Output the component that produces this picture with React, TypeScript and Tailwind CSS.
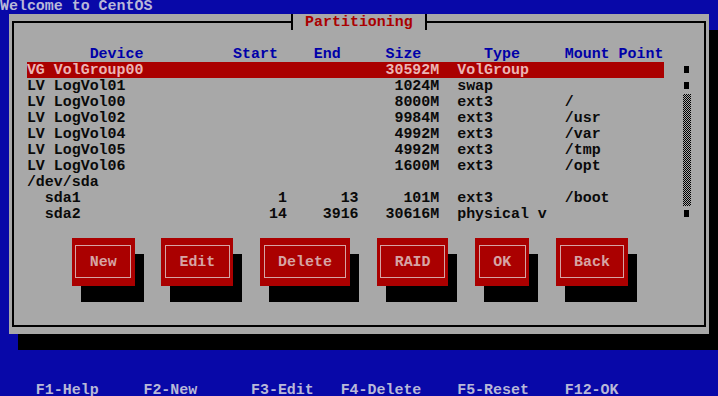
import React from 'react'

// text-mode screen: 80x25 cells of 8.975 x 16 px
type Part = { device: string; start?: string; end?: string; size?: string; type?: string; mount?: string }

const PARTS: Part[] = [
  { device: 'VG VolGroup00', size: '30592M', type: 'VolGroup' },
  { device: 'LV LogVol01', size: '1024M', type: 'swap' },
  { device: 'LV LogVol00', size: '8000M', type: 'ext3', mount: '/' },
  { device: 'LV LogVol02', size: '9984M', type: 'ext3', mount: '/usr' },
  { device: 'LV LogVol04', size: '4992M', type: 'ext3', mount: '/var' },
  { device: 'LV LogVol05', size: '4992M', type: 'ext3', mount: '/tmp' },
  { device: 'LV LogVol06', size: '1600M', type: 'ext3', mount: '/opt' },
  { device: '/dev/sda' },
  { device: '  sda1', start: '1', end: '13', size: '101M', type: 'ext3', mount: '/boot' },
  { device: '  sda2', start: '14', end: '3916', size: '30616M', type: 'physical v' },
]

const BUTTONS = ['New', 'Edit', 'Delete', 'RAID', 'OK', 'Back']

const HEADER =
  (' '.repeat(7) + 'Device').padEnd(23) + 'Start'.padEnd(9) + 'End'.padEnd(8) + 'Size'.padEnd(11) + 'Type'.padEnd(9) + 'Mount Point'

const HELP = '    F1-Help     F2-New      F3-Edit   F4-Delete    F5-Reset    F12-OK'

function line(p: Part) {
  return (
    p.device.padEnd(25) +
    (p.start ?? '').padStart(4) +
    (p.end ?? '').padStart(8) +
    (p.size ?? '').padStart(9) +
    '  ' +
    (p.type ?? '').padEnd(12) +
    (p.mount ?? '')
  ).padEnd(71)
}

function Square() {
  return <div className="h-[16px] pt-[4px]"><div className="mx-auto w-[5px] h-[7px] bg-black" /></div>
}

export default function App() {
  return (
    <div className="w-[718px] h-[396px] overflow-hidden bg-[#0808a8] font-['Liberation_Mono',monospace] text-[14.956px] leading-[16px] font-bold">
      <div className="-mt-[2px]">
        <div className="h-[16px] whitespace-pre text-[#b8b8d8]">Welcome to CentOS</div>

        {/* dialog */}
        <div className="relative ml-[8.975px] w-[700.05px] h-[320px] bg-[#a8a8a8] shadow-[9px_16px_0_#000] py-[7px] px-[3.5px] flex">
          <div className="flex-1 border-2 border-black pl-[12.45px] pt-[23px] flex flex-col">
            <div className="h-[16px] whitespace-pre text-[#0000a8]">{HEADER}</div>
            <div className="flex h-[160px]">
              <div className="w-[637.225px]">
                {PARTS.map((p, i) => (
                  <div
                    key={i}
                    className={
                      i === 0
                        ? 'h-[16px] whitespace-pre bg-[#aa0000] text-[#ecb4b4]'
                        : 'h-[16px] whitespace-pre text-[#0a0a0a]'
                    }
                  >
                    {line(p)}
                  </div>
                ))}
              </div>
              <div className="ml-[17.95px] w-[8.975px] flex flex-col">
                <Square />
                <Square />
                <div className="mx-auto w-[8px] h-[112px] bg-[image:repeating-conic-gradient(#000_0_25%,#a8a8a8_0_50%)] bg-[length:2px_2px]" />
                <Square />
              </div>
            </div>
            <div className="h-[16px]" />
            <div className="flex gap-[26.925px] ml-[44.875px]">
              {BUTTONS.map((b) => (
                <div key={b} className="h-[48px] bg-[#aa0000] shadow-[9px_16px_0_#000] pt-[7px] pb-[8px] px-[3.5px] flex">
                  <div className="border border-[#d6a4a4] px-[13.45px] pt-[8px] whitespace-pre text-[#d6a4a4]">{b}</div>
                </div>
              ))}
            </div>
          </div>

          {/* title over the top border */}
          <div className="absolute left-[278.225px] top-0 h-[16px] flex">
            <div className="w-[8.975px] flex">
              <div className="w-[3.5px]" />
              <div className="w-[2px] bg-black" />
              <div className="flex-1 bg-[#a8a8a8]" />
            </div>
            <div className="whitespace-pre bg-[#a8a8a8] text-[#aa0000]"> Partitioning </div>
            <div className="w-[8.975px] flex">
              <div className="flex-1 bg-[#a8a8a8]" />
              <div className="w-[2px] bg-black" />
              <div className="w-[3.5px]" />
            </div>
          </div>
        </div>

        <div className="h-[48px]" />
        <div className="h-[16px] whitespace-pre text-[#b8b8d8]">{HELP}</div>
      </div>
    </div>
  )
}
